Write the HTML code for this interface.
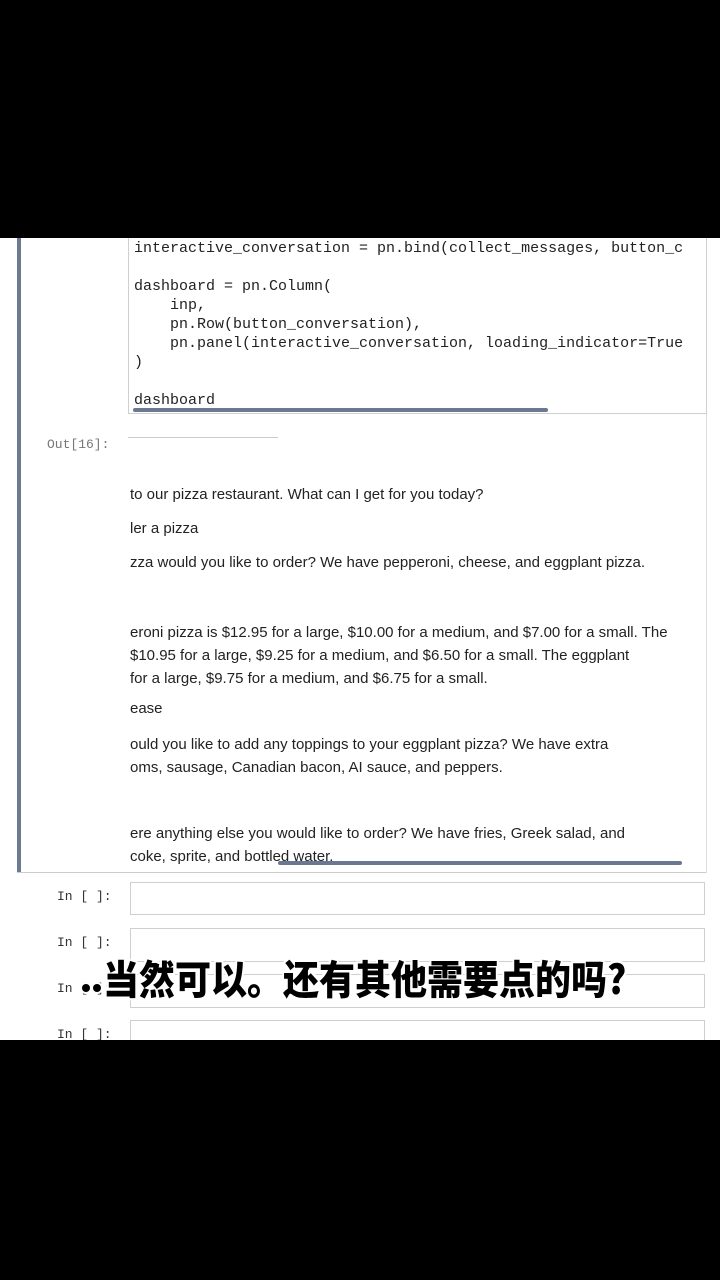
<!DOCTYPE html>
<html><head><meta charset="utf-8"><style>
body{margin:0;width:720px;height:1280px;background:#000;position:relative;overflow:hidden;font-family:"Liberation Sans",sans-serif}
.w{position:absolute;left:0;top:238px;width:720px;height:802px;background:#fff;overflow:hidden}
.a{position:absolute}
.code{font-family:"Liberation Mono",monospace;font-size:15px;color:#222;white-space:pre;line-height:19px}
.t{font-size:15px;color:#222;white-space:pre}
.lbl{font-family:"Liberation Mono",monospace;font-size:13px;color:#777;white-space:pre}
.in{color:#333}
.box{position:absolute;left:130px;width:573px;border:1px solid #cfcfcf;background:#fff}
.sub{position:absolute;left:103px;top:948px;font-family:"Noto Sans CJK SC",sans-serif;font-weight:900;font-size:40px;color:#000;white-space:nowrap;transform:scaleX(0.9);transform-origin:0 0;text-shadow:2px 0 #fff,-2px 0 #fff,0 2px #fff,0 -2px #fff,2px 2px #fff,-2px -2px #fff,2px -2px #fff,-2px 2px #fff}
.dot{position:absolute;width:8px;height:8px;border-radius:50%;background:#000;box-shadow:0 0 0 2px #fff}
</style></head><body>
<div class="w">
 <div class="a" style="left:17px;top:0;width:4px;height:635px;background:#6a7b93"></div>
 <div class="a" style="left:17px;top:634px;width:690px;height:1px;background:#ccc"></div>
 <div class="a" style="left:706px;top:0;width:1px;height:635px;background:#ddd"></div>
 <div class="a" style="left:128px;top:-5px;width:577px;height:179px;border:1px solid #cfcfcf;background:#fff"></div>
 <div class="a code" style="left:134px;top:1px">interactive_conversation = pn.bind(collect_messages, button_c

dashboard = pn.Column(
    inp,
    pn.Row(button_conversation),
    pn.panel(interactive_conversation, loading_indicator=True
)

dashboard</div>
 <div class="a" style="left:133px;top:170px;width:415px;height:4px;background:#6b7890;border-radius:2px"></div>
 <div class="a lbl" style="left:47px;top:199px">Out[16]:</div>
 <div class="a" style="left:128px;top:199px;width:150px;height:1px;background:#ccc"></div>
 <div class="a t" style="left:130px;top:248px">to our pizza restaurant. What can I get for you today?</div>
 <div class="a t" style="left:130px;top:282px">ler a pizza</div>
 <div class="a t" style="left:130px;top:316px">zza would you like to order? We have pepperoni, cheese, and eggplant pizza.</div>
 <div class="a t" style="left:130px;top:383px;line-height:23px">eroni pizza is $12.95 for a large, $10.00 for a medium, and $7.00 for a small. The
$10.95 for a large, $9.25 for a medium, and $6.50 for a small. The eggplant
for a large, $9.75 for a medium, and $6.75 for a small.</div>
 <div class="a t" style="left:130px;top:462px">ease</div>
 <div class="a t" style="left:130px;top:495px;line-height:23px">ould you like to add any toppings to your eggplant pizza? We have extra
oms, sausage, Canadian bacon, AI sauce, and peppers.</div>
 <div class="a t" style="left:130px;top:584px;line-height:23px">ere anything else you would like to order? We have fries, Greek salad, and
coke, sprite, and bottled water.</div>
 <div class="a" style="left:278px;top:623px;width:404px;height:4px;background:#6b7890;border-radius:2px"></div>
 <div class="a lbl in" style="left:57px;top:651px">In [ ]:</div>
 <div class="box" style="top:644px;height:31px"></div>
 <div class="a lbl in" style="left:57px;top:697px">In [ ]:</div>
 <div class="box" style="top:690px;height:32px"></div>
 <div class="a lbl in" style="left:57px;top:743px">In [ ]:</div>
 <div class="box" style="top:736px;height:32px"></div>
 <div class="a lbl in" style="left:57px;top:789px">In [ ]:</div>
 <div class="box" style="top:782px;height:40px"></div>
</div>
<div class="dot" style="left:82px;top:984px"></div>
<div class="dot" style="left:93px;top:984px"></div>
<div class="sub">当然可以。还有其他需要点的吗?</div>
</body></html>
